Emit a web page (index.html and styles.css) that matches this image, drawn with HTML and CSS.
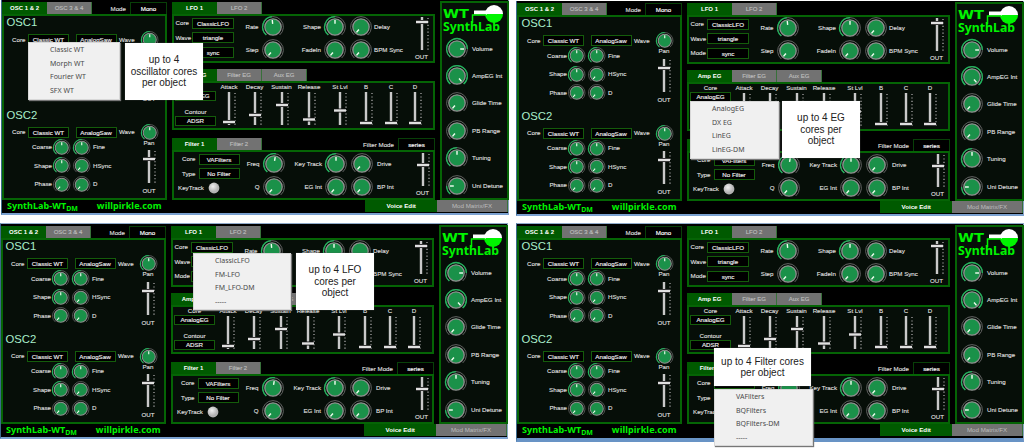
FILE: index.html
```html
<!DOCTYPE html>
<html lang="en">
<head>
<meta charset="utf-8">
<title>SynthLab-WT DM</title>
<link rel="stylesheet" href="styles.css">
</head>
<body>
<main class="sheet" id="sheet"></main>
<script src="app.js"></script>
</body>
</html>
```

FILE: styles.css
```css
* { box-sizing: border-box; }
body {
  margin: 0;
  background: #fff;
  font-family: "Liberation Sans", Arial, sans-serif;
  overflow: hidden;
}
svg { display: block; overflow: visible; flex: none; }
.sheet {
  position: relative;
  display: grid;
  grid-template-columns: 515px 509px;
  grid-template-rows: 223px 225px;
  width: 1024px;
  height: 448px;
  overflow: hidden;
}
.unit { padding-left: 1px; min-width: 0; }
.unit.b { padding-top: 1px; }
.unit.c { padding-left: 0; }

/* Plug-in window */
.synth {
  display: grid;
  grid-template-columns: 165px 263px 68px;
  grid-template-rows: 198px 13px;
  column-gap: 5px;
  width: 508px;
  padding: 2px 0 0;
  border-left: 1px solid #3d6a8c;
  border-right: 1px solid #8aa4c4;
  border-bottom: 2px solid #7ba1d0;
  background: #000;
  color: #dedede;
  font-size: 6.2px;
  line-height: 8px;
  white-space: nowrap;
  -webkit-text-stroke: 0.15px currentColor;
}
.c .synth, .d .synth { border-top: 1px solid #8fa9c9; }
.d .synth { border-bottom: 4px solid #6893c5; padding-bottom: 1px; }
.panel { border: 2px solid #056405; background: #060e08; }

.tabs { display: flex; height: 12px; }
.tab {
  width: 45px;
  line-height: 12px;
  text-align: center;
  font-size: 6px;
  background: #727272;
  color: #bdbdbd;
  border-right: 1px solid #38703a;
}
.tab.on { background: #005a00; color: #fff; font-weight: bold; border: 0; -webkit-text-stroke: 0; }
.tabs .mode { margin-left: auto; line-height: 13px; padding-right: 4px; }
.tabs .modebox { width: 37px; border: 1px solid #083f08; border-bottom: 0; text-align: center; line-height: 12px; color: #fff; }
.box {
  height: 11px;
  border: 1px solid #145c0b;
  background: #000;
  color: #ececec;
  line-height: 9px;
  display: flex;
  justify-content: center;
}

/* Oscillators */
.left .panel { height: 186px; }
.osc { height: 92.5px; }
.osc h2 {
  margin: 0;
  padding: 0 0 0 2.5px;
  height: 15px;
  font-size: 11.3px;
  line-height: 13px;
  font-weight: normal;
  color: #a9efcb;
  -webkit-text-stroke: 0;
}
.oscrow {
  display: grid;
  grid-template-columns: 16px 41px 6.5px 41px 24px 17px;
  padding-left: 8px;
  height: 13px;
  align-items: center;
}
.oscrow .wave { padding-left: 2.5px; }
.oscbody { display: flex; justify-content: space-between; padding-right: 4px; }
.oscknobs {
  display: grid;
  grid-template-columns: 48px 20px 20px auto;
  grid-auto-rows: 18.5px;
  align-items: center;
  padding-top: 1.5px;
}
.oscknobs svg { justify-self: center; }
.oscknobs .r { padding-left: 1px; }
.r { text-align: left; }
.l { text-align: right; }
.pan { width: 24px; display: flex; flex-direction: column; align-items: center; padding-top: 2px; }
.pan svg { margin: 3.5px 0 4px; }

/* LFO, EG and filter sections */
.middle { display: flex; flex-direction: column; }
.lfo .panel { height: 49px; }
.section { margin-bottom: 6px; }
.eg { margin-bottom: 8px; }
.eg .panel { height: 49px; }
.filter { margin: 0; }
.filter .panel { height: 50px; }
.modrow { display: flex; }
.fields { display: grid; grid-template-columns: 18px 42px; grid-auto-rows: 14.5px; align-items: center; height: 45px; }
.fields span { padding-left: 1.5px; }
.filter .fields { grid-template-columns: 24.5px 41px; }
.filter .fields span { text-align: right; padding-right: 3px; }
.filter .fields span.kt { padding-right: 0; padding-left: 4px; text-align: left; }
.filter .fields svg { justify-self: start; margin-left: 9px; }
.knobs { display: grid; grid-template-columns: 24.5px 28.5px 34px 28px 24px 40px; grid-auto-rows: 22.6px; align-items: center; }
.filter .knobs { grid-template-columns: 20px 28.5px 34px 28px 24px 40px; padding-top: 1px; }
.knobs svg { justify-self: center; }
.knobs .r { padding-left: 1px; }
.filter .knobs .r { padding-left: 3px; }
.out { width: 17px; display: flex; flex-direction: column; align-items: center; padding-top: 1px; }
.out span { padding-top: 3px; }
.egrow { display: grid; grid-template-columns: 43px 24px 27px 27px 28px 34px 18px 32px 16px; }
.egfields { display: flex; flex-direction: column; padding: 0 1px; }
.egfields span { text-align: center; line-height: 8px; }
.egfields .box { height: 10px; line-height: 8px; }
.egfields .gap { margin-top: 6.5px; }
.strip { display: flex; flex-direction: column; align-items: center; }
.strip svg { margin-top: 1px; }

/* Master strip */
.master { width: 69px; margin-top: -1px; height: 199px; }
.logo { height: 32px; }
.big { display: grid; grid-template-columns: 30px auto; height: 27.4px; align-items: center; }
.big svg { justify-self: center; }
.foot { grid-column: 1 / -1; display: flex; height: 13px; color: #00f400; font: bold 9px/11px "Noto Sans", sans-serif; -webkit-text-stroke: 0; }
.foot .name { width: 90px; padding-left: 5px; letter-spacing: 0.05px; }
.foot .name sub { font-size: 7px; line-height: 0; vertical-align: -2px; }
.foot .site { width: 274px; padding-left: 5px; letter-spacing: 0.1px; }
.foot .tab { width: 71px; font: 6.2px/12px "Liberation Sans", sans-serif; height: 12px; }
.foot .tab.on { width: 72px; font-weight: bold; }

/* Pop-up menus and notes lying over the windows */
.menu, .note { position: absolute; }
.menu {
  background: #f0f0f0;
  border: 1px solid #d8d8d8;
  box-shadow: 1px 1px 1px #777;
  padding: 0 0 0 21px;
  color: #4a4a4a;
  font: 7px/13.6px "Noto Sans", sans-serif;
  white-space: nowrap;
}
.note {
  background: #fff;
  color: #222;
  font-size: 10px;
  line-height: 11.4px;
  display: flex;
  align-items: center;
  justify-content: center;
  text-align: center;
  white-space: pre;
  box-shadow: 0 0 1px #555;
}
.menu-a { left: 28px; top: 42px; width: 92px; height: 58px; }
.note-a { left: 125px; top: 43px; width: 78px; height: 57px; }
.menu-b { left: 690px; top: 101px; width: 89px; height: 58px; }
.note-b { left: 782px; top: 101px; width: 78px; height: 57px; }
.menu-c { left: 193px; top: 253px; width: 98px; height: 57px; }
.note-c { left: 296px; top: 253px; width: 78px; height: 57px; }
.menu-d { left: 714px; top: 389px; width: 99px; height: 57px; }
.note-d { left: 714px; top: 348px; width: 97px; height: 38px; }
```

FILE: app.js
```js
// Point on a circle, angle in degrees clockwise from twelve o'clock.
function point(r, deg) {
  const a = deg * Math.PI / 180;
  return (r * Math.sin(a)).toFixed(2) + ' ' + (-r * Math.cos(a)).toFixed(2);
}

function arc(r, from, to) {
  return `M${point(r, from)}A${r} ${r} 0 ${to - from > 180 ? 1 : 0} 1 ${point(r, to)}`;
}

const MIN = -140;

function knob(deg, size = 22) {
  const lit = deg > MIN ? `<path d="${arc(10.4, MIN, deg)}" stroke="#21b45c" stroke-width="1.3"/>` : '';
  return `<svg width="${size}" height="${size}" viewBox="-11 -11 22 22" fill="none">
    <path d="${arc(10.4, MIN, 140)}" stroke="#626262" stroke-width="1"/>${lit}
    <circle r="8.2" fill="#1a9149" stroke="#8f8f8f" stroke-width="1.3"/>
    <path d="M${point(3.2, deg)}L${point(7, deg)}" stroke="#f2fff2" stroke-width="1.4"/></svg>`;
}

function slider(pos, h = 33) {
  return `<svg width="14" height="${h}" viewBox="-7 0 14 ${h}">
    <path d="M0 0V${h}" stroke="#c9c9c9" stroke-width="2.4"/>
    <path d="M6 1V${h}" stroke="#8a8a8a" stroke-width="1.6" stroke-dasharray="1.1 2.3"/>
    <path d="M-6 ${pos}H6" stroke="#111" stroke-width="4"/>
    <path d="M-6 ${pos}H6" stroke="#e0e0e0" stroke-width="2.4"/></svg>`;
}

const box = t => `<div class="box">${t}</div>`;
const l = t => `<span class="l">${t}</span>`;
const r = t => `<span class="r">${t}</span>`;
const tabs = names => names.map((n, i) => `<div class="tab${i ? '' : ' on'}">${n}</div>`).join('');

function osc(n) {
  const s = 17.5;
  return `<section class="osc"><h2>OSC${n}</h2>
    <div class="oscrow"><span>Core</span>${box('Classic WT')}<i></i>${box('AnalogSaw')}<span class="wave">Wave</span>${knob(0, s)}</div>
    <div class="oscbody"><div class="oscknobs">
      ${l('Coarse')}${knob(0, s)}${knob(0, s)}${r('Fine')}
      ${l('Shape')}${knob(0, s)}${knob(MIN, s)}${r('HSync')}
      ${l('Phase')}${knob(MIN, s)}${knob(MIN, s)}${r('D')}
    </div><div class="pan"><span>Pan</span>${slider(9)}<span>OUT</span></div></div></section>`;
}

const strips = [['Attack', 30], ['Decay', 23], ['Sustain', 13], ['Release', 27.5], ['St Lvl', 18.5], ['B', 31], ['C', 31], ['D', 31]];
const master = [['Volume', 90], ['AmpEG Int', 140], ['Glide Time', MIN], ['PB Range', MIN], ['Tuning', 0], ['Uni Detune', -90]];

const ball = `<svg width="12" height="12" viewBox="-6 -6 12 12"><defs><radialGradient id="ball" cx=".4" cy=".35"><stop offset="0" stop-color="#f0f0f0"/><stop offset="1" stop-color="#b2b2b2"/></radialGradient></defs><circle r="5.4" fill="url(#ball)"/></svg>`;

const logo = `<svg class="logo" width="64" height="32" viewBox="441 3 64 32" font-weight="bold" fill="#00f400" stroke="none">
  <text x="442" y="18" font-family="DejaVu Sans, sans-serif" font-size="13" font-weight="bold" textLength="26" lengthAdjust="spacingAndGlyphs">WT</text>
  <text x="442" y="31" font-family="Noto Sans, sans-serif" font-size="11.5" textLength="57" lengthAdjust="spacingAndGlyphs">SynthLab</text>
  <path d="M484 14a9 9 0 0 1 18 0z" fill="#fff"/><path d="M484 14a9 9 0 0 0 18 0z"/>
  <path d="M473 10.500H486V14.500H473z" fill="#fff"/><path d="M485 15H471.500V23" fill="none" stroke="#00f400" stroke-width="1.500"/></svg>`;

function synth() {
  return `<div class="synth">
  <div class="left"><div class="tabs">${tabs(['OSC 1 &amp; 2', 'OSC 3 &amp; 4'])}<span class="mode">Mode</span><div class="modebox">Mono</div></div>
    <div class="panel">${osc(1)}${osc(2)}</div></div>
  <div class="middle">
    <section class="section lfo"><div class="tabs">${tabs(['LFO 1', 'LFO 2'])}</div>
      <div class="panel modrow"><div class="fields"><span>Core</span>${box('ClassicLFO')}<span>Wave</span>${box('triangle')}<span>Mode</span>${box('sync')}</div>
      <div class="knobs">${l('Rate')}${knob(-6)}${l('Shape')}${knob(0)}${knob(MIN)}${r('Delay')}
        ${l('Step')}${knob(MIN)}${l('FadeIn')}${knob(MIN)}${knob(MIN)}${r('BPM Sync')}</div>
      <div class="out">${slider(5)}<span>OUT</span></div></div></section>
    <section class="section eg"><div class="tabs">${tabs(['Amp EG', 'Filter EG', 'Aux EG'])}</div>
      <div class="panel egrow"><div class="egfields"><span>Core</span>${box('AnalogEG')}<span class="gap">Contour</span>${box('ADSR')}</div>
      ${strips.map(([t, p]) => `<div class="strip"><span>${t}</span>${slider(p)}</div>`).join('')}</div></section>
    <section class="section filter"><div class="tabs">${tabs(['Filter 1', 'Filter 2'])}<span class="mode">Filter Mode</span><div class="modebox">series</div></div>
      <div class="panel modrow"><div class="fields"><span>Core</span>${box('VAFilters')}<span>Type</span>${box('No Filter')}<span class="kt">KeyTrack</span>${ball}</div>
      <div class="knobs">${l('Freq')}${knob(10)}${l('Key Track')}${knob(0)}${knob(MIN)}${r('Drive')}
        ${l('Q')}${knob(MIN)}${l('EG Int')}${knob(MIN)}${knob(MIN)}${r('BP Int')}</div>
      <div class="out">${slider(12)}<span>OUT</span></div></div></section>
  </div>
  <div class="panel master">${logo}${master.map(([t, d]) => `<div class="big">${knob(d)}<span>${t}</span></div>`).join('')}</div>
  <div class="foot"><div class="name">SynthLab-WT<sub>DM</sub></div><div class="site">willpirkle.com</div><div class="tab on">Voice Edit</div><div class="tab">Mod Matrix/FX</div></div>
  </div>`;
}

const overlays = [
  ['a', ['Classic WT', 'Morph WT', 'Fourier WT', 'SFX WT'], 'up to 4\noscillator cores\nper object'],
  ['b', ['AnalogEG', 'DX EG', 'LinEG', 'LinEG-DM'], 'up to 4 EG\ncores per\nobject'],
  ['c', ['ClassicLFO', 'FM-LFO', 'FM_LFO-DM', '-----'], 'up to 4 LFO\ncores per\nobject'],
  ['d', ['VAFilters', 'BQFilters', 'BQFilters-DM', '-----'], 'up to 4 Filter cores\nper object']
];

document.getElementById('sheet').innerHTML =
  overlays.map(([k]) => `<div class="unit ${k}">${synth()}</div>`).join('') +
  overlays.map(([k, items, note]) =>
    `<div class="menu menu-${k}">${items.map(i => `<div>${i}</div>`).join('')}</div><div class="note note-${k}">${note}</div>`).join('');
```
